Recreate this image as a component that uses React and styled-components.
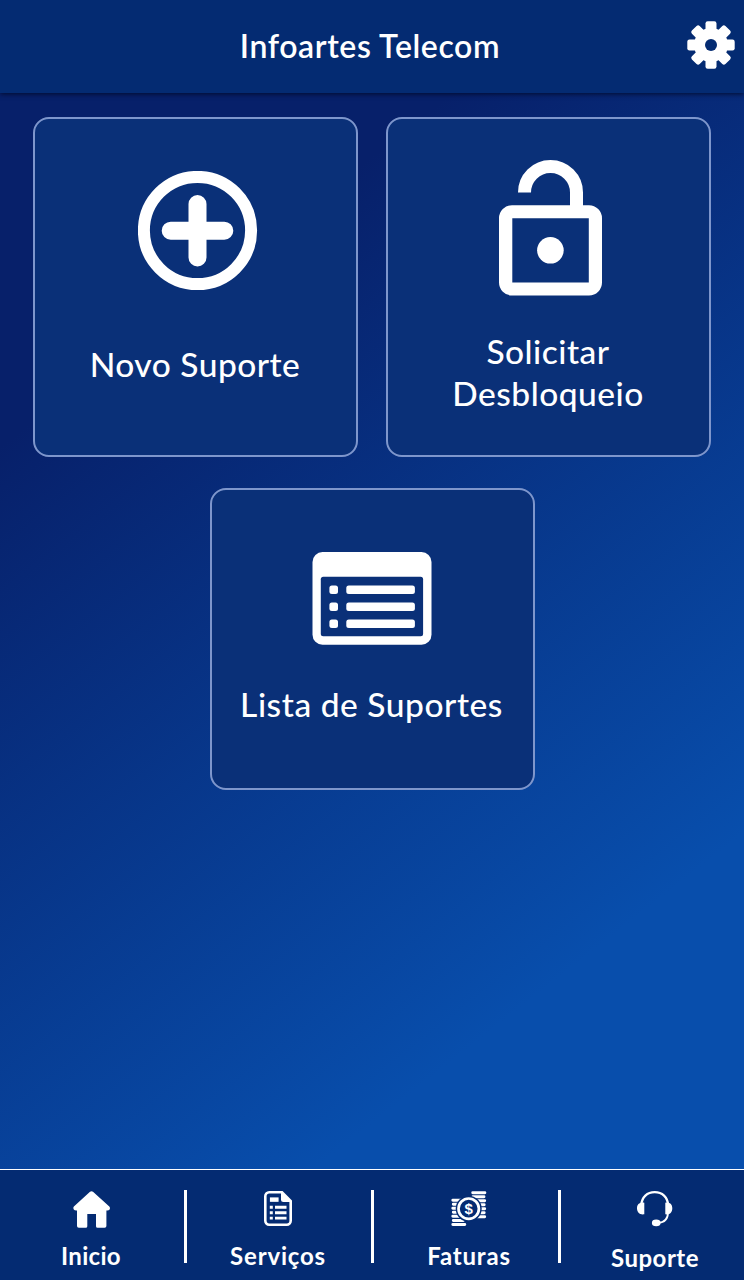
import styled, { createGlobalStyle } from "styled-components";

const GlobalStyle = createGlobalStyle`
  * {
    box-sizing: border-box;
  }

  body {
    margin: 0;
    font-family: Lato, "Open Sans", sans-serif;
    color: #fff;
  }
`;

const Screen = styled.div`
  width: 744px;
  height: 1280px;
  display: flex;
  flex-direction: column;
  overflow: hidden;
  background: linear-gradient(142deg, #07206a 0%, #07206a 24%, #084eac 76%, #084eac 100%);
`;

const Header = styled.header`
  flex: none;
  height: 93px;
  display: grid;
  grid-template-columns: 1fr 270px 1fr;
  align-items: center;
  padding: 0 9px 2px 5px;
  background: #042b72;
  box-shadow: 0 1px 5px rgba(0, 5, 30, 0.8);
`;

const Title = styled.h1`
  grid-column: 2;
  margin: 0;
  font-size: 32px;
  font-weight: 600;
  line-height: 40px;
  letter-spacing: ${(props) => props.$spacing}px;
  white-space: nowrap;
  text-align: center;
`;

const SettingsButton = styled.button`
  justify-self: end;
  margin-bottom: 2px;
  padding: 0;
  border: 0;
  background: none;
  color: #fff;
  line-height: 0;
`;

const Main = styled.main`
  flex: 1;
  display: flex;
  flex-wrap: wrap;
  align-content: flex-start;
  justify-content: center;
  gap: 31px 28px;
  padding: 24px 33px 0;
`;

const Card = styled.section`
  width: 325px;
  height: ${(props) => props.$height}px;
  padding-top: ${(props) => props.$top}px;
  display: flex;
  flex-direction: column;
  align-items: center;
  gap: ${(props) => props.$gap}px;
  border: 2px solid #7e96cc;
  border-radius: 16px;
  background: #0a3078;

  svg {
    flex: none;
    margin-left: ${(props) => props.$nudge || 0}px;
  }
`;

const CardLabel = styled.div`
  font-size: 33.5px;
  font-weight: 500;
  line-height: 42px;
  letter-spacing: ${(props) => props.$spacing}px;
  text-align: center;
  white-space: nowrap;
  padding-right: 1px;
`;

const Footer = styled.nav`
  flex: none;
  height: 111px;
  display: grid;
  grid-template-columns: 187px 187px 187px 183px;
  border-top: 1px solid #fff;
  background: #042b72;
`;

const Tab = styled.a`
  display: grid;
  grid-template-columns: 1fr 3px;
  padding-top: 20px;

  &:last-child {
    grid-template-columns: 1fr;
  }
`;

const TabBody = styled.div`
  display: flex;
  flex-direction: column;
  align-items: center;
  padding-top: 1px;
  padding-left: ${(props) => props.$left || 0}px;
  padding-right: ${(props) => props.$right || 0}px;
`;

const TabIcon = styled.div`
  height: ${(props) => props.$height || 37}px;
  line-height: 0;
`;

const TabLabel = styled.span`
  margin-top: 13px;
  font-size: 24px;
  font-weight: 700;
  line-height: 30px;
  letter-spacing: ${(props) => props.$spacing}px;
  white-space: nowrap;
`;

const Divider = styled.div`
  height: 73px;
  background: #fff;
`;

const GearIcon = () => (
  <svg width="48" height="48" viewBox="-24 -24 48 48" fill="none">
    {[0, 45, 90, 135].map((angle) => (
      <rect key={angle} x="-5.5" y="-23.7" width="11" height="47.4" rx="2.2" fill="#fff" transform={`rotate(${angle})`} />
    ))}
    <circle r="17" fill="#fff" />
    <circle r="6" fill="#042b72" />
  </svg>
);

const PlusIcon = () => (
  <svg width="120" height="120" viewBox="0 0 120 120" fill="none" stroke="#fff">
    <circle cx="59.5" cy="59.5" r="53.6" strokeWidth="12" />
    <path d="M59.5 33v53.5M32.7 59.7h53.6" strokeWidth="18" strokeLinecap="round" />
  </svg>
);

const UnlockIcon = () => (
  <svg width="104" height="136" viewBox="0 0 104 136">
    <path d="M25.5 32.5a26 26 0 0 1 52 0V50" fill="none" stroke="#fff" strokeWidth="13" />
    <path
      fill="#fff"
      fillRule="evenodd"
      d="M13 45.2h77a13 13 0 0 1 13 13v64.3a13 13 0 0 1-13 13H13a13 13 0 0 1-13-13V58.2a13 13 0 0 1 13-13zM13.3 58.2v64.2h76.5V58.2z"
    />
    <circle cx="51.4" cy="90.3" r="13.3" fill="#fff" />
  </svg>
);

const ListIcon = () => (
  <svg width="120" height="93" viewBox="0 0 120 93" fill="#fff">
    <rect x="0.5" width="119" height="92.8" rx="10" />
    <rect x="8.8" y="24.8" width="102.3" height="59.5" rx="2.5" fill="#0a3078" />
    {[33.4, 50.5, 67.5].map((y) => (
      <g key={y}>
        <rect x="17.4" y={y} width="8.6" height="8.6" rx="2.5" />
        <rect x="34.3" y={y} width="68.6" height="8.6" rx="2.5" />
      </g>
    ))}
  </svg>
);

const HomeIcon = () => (
  <svg width="37" height="37" viewBox="0 0 37 37">
    <path
      fill="#fff"
      d="M17 .8q1.5-1.3 3 0L36.3 15.5q1.3 1.7.1 3.2-.6.9-3 .7V35q0 1.8-1.8 1.8h-7q-1.6 0-1.6-1.6V23H14.3v12.2q0 1.6-1.6 1.6H5.8Q4 36.8 4 35V19.4q-2.2.2-3-.7-1.3-1.5-.1-3.2z"
    />
  </svg>
);

const DocumentIcon = () => (
  <svg width="28" height="35" viewBox="0 0 28 35" fill="none" stroke="#fff">
    <path d="M18 1.3H5.2a3.9 3.9 0 0 0-3.9 3.9v24.6a3.9 3.9 0 0 0 3.9 3.9h17.6a3.9 3.9 0 0 0 3.9-3.9V10z" strokeWidth="2.6" />
    <path d="M17 0l11 11h-8.5q-2.5 0-2.5-2.5z" fill="#fff" stroke="none" />
    <rect x="6.5" y="7" width="7.5" height="3.2" fill="#fff" strokeWidth="1.2" />
    <path d="M5.8 16.3h3M11 16.3h11.5M5.8 21.7h3M11 21.7h11.5M5.8 27.1h3M11 27.1h11.5" strokeWidth="2.9" />
  </svg>
);

const CoinsIcon = () => (
  <svg width="36" height="36" viewBox="0 0 36 36">
    <path
      d="M21.7 1.8h12.2M22 5.8h11M23 9.8h10.7M23 13.8h10.2M23 17.8h10.7M23 21.8h10.2M23 25.8h10.7M1.8 9.3h10M2.3 13.3h9M1.8 17.3h10M2.3 21.3h9M1.8 25.3h10M2.3 29.5h10M1.8 33.5h12"
      fill="none"
      stroke="#fff"
      strokeWidth="2.9"
      strokeLinecap="round"
    />
    <circle cx="17.7" cy="17.7" r="13" fill="#042b72" />
    <circle cx="17.7" cy="17.7" r="10.2" fill="none" stroke="#fff" strokeWidth="2.7" />
    <text x="17.7" y="23" textAnchor="middle" fill="#fff" fontSize="15" fontWeight="700" fontFamily="Liberation Sans">
      $
    </text>
  </svg>
);

const HeadsetIcon = () => (
  <svg width="36" height="36" viewBox="0 0 36 36">
    <path d="M4.2 14.5C4.7 6 10.3 1.2 17.7 1.2S30.7 6 31.2 14.5" fill="none" stroke="#fff" strokeWidth="2.3" />
    <path d="M31 21c0 7-3.5 10.6-10 10.9" fill="none" stroke="#fff" strokeWidth="1.8" />
    <path fill="#fff" d="M7.3 11.7v11.6c-4.5.7-7.3-1.8-7.3-6s2.8-6.5 7.3-5.6zM28.3 11.7v11.6c4.5.7 7-1.8 7-6s-2.5-6.5-7-5.6z" />
    <ellipse cx="19.2" cy="31.9" rx="4.3" ry="3.3" fill="#fff" />
  </svg>
);

const App = () => {
  return (
    <Screen>
      <GlobalStyle />
      <Header>
        <Title $spacing={0.6}>Infoartes Telecom</Title>
        <SettingsButton aria-label="Configurações">
          <GearIcon />
        </SettingsButton>
      </Header>

      <Main>
        <Card $height={340} $top={52} $gap={52} $nudge={4}>
          <PlusIcon />
          <CardLabel $spacing={0.5}>Novo Suporte</CardLabel>
        </Card>
        <Card $height={340} $top={41} $gap={34} $nudge={4}>
          <UnlockIcon />
          <CardLabel $spacing={0.5}>
            Solicitar
            <br />
            Desbloqueio
          </CardLabel>
        </Card>
        <Card $height={302} $top={62} $gap={38}>
          <ListIcon />
          <CardLabel $spacing={0.55}>Lista de Suportes</CardLabel>
        </Card>
      </Main>

      <Footer>
        <Tab>
          <TabBody $right={2}>
            <TabIcon>
              <HomeIcon />
            </TabIcon>
            <TabLabel $spacing={0.3}>Inicio</TabLabel>
          </TabBody>
          <Divider />
        </Tab>
        <Tab>
          <TabBody $right={2}>
            <TabIcon>
              <DocumentIcon />
            </TabIcon>
            <TabLabel $spacing={0.8}>Serviços</TabLabel>
          </TabBody>
          <Divider />
        </Tab>
        <Tab>
          <TabBody $left={6}>
            <TabIcon>
              <CoinsIcon />
            </TabIcon>
            <TabLabel $spacing={0.8}>Faturas</TabLabel>
          </TabBody>
          <Divider />
        </Tab>
        <Tab>
          <TabBody $left={5}>
            <TabIcon $height={39}>
              <HeadsetIcon />
            </TabIcon>
            <TabLabel $spacing={0.5}>Suporte</TabLabel>
          </TabBody>
        </Tab>
      </Footer>
    </Screen>
  );
};

export default App;
